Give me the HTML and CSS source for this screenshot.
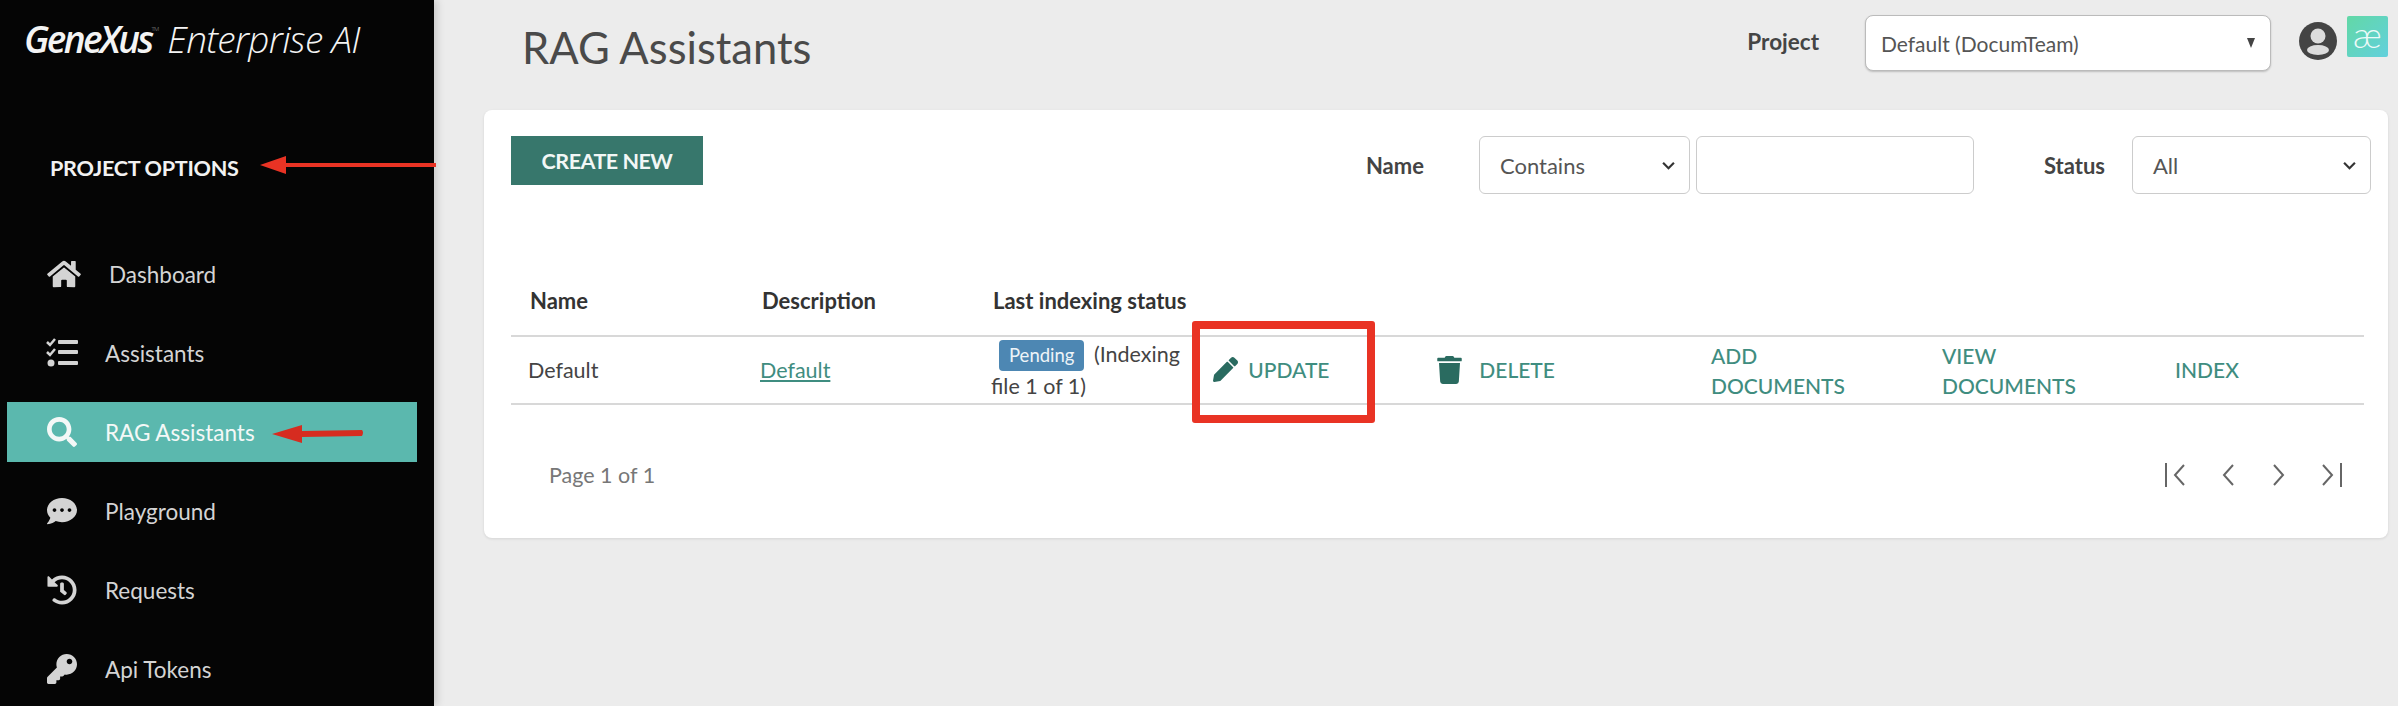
FILE: index.html
```html
<!DOCTYPE html>
<html lang="en">
<head>
  <meta charset="UTF-8">
  <meta name="viewport" content="width=device-width, initial-scale=1.0">
  <title>RAG Assistants</title>
  <link rel="stylesheet" href="styles.css">
</head>
<body>
  <div class="sidebar">
    <div class="logo"><b>GeneXus</b><sup>TM</sup> Enterprise AI</div>
    <h2>PROJECT OPTIONS</h2>
    <ul class="nav">
      <li>
        <svg class="nav-icon home" viewBox="0 0 576 512"><path d="M280.37 148.26L96 300.11V464a16 16 0 0 0 16 16l112.06-.29a16 16 0 0 0 15.92-16V368a16 16 0 0 1 16-16h64a16 16 0 0 1 16 16v95.64a16 16 0 0 0 16 16.05L464 480a16 16 0 0 0 16-16V300L295.67 148.26a12.19 12.19 0 0 0-15.3 0zM571.6 251.47L488 182.56V44.05a12 12 0 0 0-12-12h-56a12 12 0 0 0-12 12v72.61L318.47 43a48 48 0 0 0-61 0L4.34 251.47a12 12 0 0 0-1.6 16.9l25.5 31A12 12 0 0 0 45.15 301l235.22-193.74a12.19 12.19 0 0 1 15.3 0L530.9 301a12 12 0 0 0 16.9-1.6l25.5-31a12 12 0 0 0-1.7-16.93z"/></svg>
        <a class="home-link" href="#">Dashboard</a>
      </li>
      <li>
        <svg class="nav-icon" viewBox="0 0 32 30">
          <path class="tick" d="M1 4l3 3 5-6M1 14l3 3 5-6"/>
          <circle cx="5" cy="25" r="3.500"/>
          <rect x="12" y="2" width="20" height="4" rx="1"/>
          <rect x="12" y="12" width="20" height="4" rx="1"/>
          <rect x="12" y="23" width="20" height="4" rx="1"/>
        </svg>
        <a href="#">Assistants</a>
      </li>
      <li class="active">
        <svg class="nav-icon" viewBox="0 0 512 512"><path d="M505 442.7L405.3 343c-4.5-4.5-10.6-7-17-7H372c27.6-35.3 44-79.7 44-128C416 93.1 322.9 0 208 0S0 93.1 0 208s93.1 208 208 208c48.3 0 92.7-16.4 128-44v16.3c0 6.4 2.5 12.5 7 17l99.7 99.7c9.4 9.4 24.6 9.4 33.9 0l28.3-28.3c9.4-9.4 9.4-24.6.1-34zM208 336c-70.7 0-128-57.2-128-128 0-70.7 57.2-128 128-128 70.7 0 128 57.2 128 128 0 70.7-57.2 128-128 128z"/></svg>
        <a href="#">RAG Assistants</a>
      </li>
      <li>
        <svg class="nav-icon" viewBox="0 0 512 512"><path d="M256 32C114.6 32 0 125.1 0 240c0 49.6 21.4 95 57 130.7C44.5 421.1 2.7 466 2.2 466.5c-2.2 2.3-2.8 5.7-1.5 8.7S4.8 480 8 480c66.3 0 116-31.8 140.6-51.4 32.7 12.3 69 19.4 107.4 19.4 141.4 0 256-93.1 256-208S397.4 32 256 32zM128 272c-17.7 0-32-14.3-32-32s14.3-32 32-32 32 14.3 32 32-14.3 32-32 32zm128 0c-17.7 0-32-14.3-32-32s14.3-32 32-32 32 14.3 32 32-14.3 32-32 32zm128 0c-17.7 0-32-14.3-32-32s14.3-32 32-32 32 14.3 32 32-14.3 32-32 32z"/></svg>
        <a href="#">Playground</a>
      </li>
      <li>
        <svg class="nav-icon" viewBox="0 0 512 512"><path d="M504 255.531c.253 136.64-111.18 248.372-247.82 248.468-59.015.042-113.223-20.53-155.822-54.911-11.077-8.94-11.905-25.541-1.839-35.607l11.267-11.267c8.609-8.609 22.353-9.551 31.891-1.984C173.062 425.135 212.781 440 256 440c101.705 0 184-82.311 184-184 0-101.705-82.311-184-184-184-48.814 0-93.149 18.969-126.068 49.932l50.754 50.754c10.08 10.08 2.941 27.314-11.313 27.314H24c-8.837 0-16-7.163-16-16V38.627c0-14.254 17.234-21.393 27.314-11.314l49.372 49.372C129.209 34.136 189.552 8 256 8c136.81 0 247.747 110.78 248 247.531zm-180.912 78.784l9.823-12.63c8.138-10.463 6.253-25.542-4.21-33.679L288 256.349V152c0-13.255-10.745-24-24-24h-16c-13.255 0-24 10.745-24 24v135.651l65.409 50.874c10.463 8.137 25.541 6.253 33.679-4.21z"/></svg>
        <a href="#">Requests</a>
      </li>
      <li>
        <svg class="nav-icon" viewBox="0 0 512 512"><path d="M512 176.001C512 273.203 433.202 352 336 352c-11.22 0-22.19-1.062-32.827-3.069l-24.012 27.014A23.999 23.999 0 0 1 261.223 384H224v40c0 13.255-10.745 24-24 24h-40v40c0 13.255-10.745 24-24 24H24c-13.255 0-24-10.745-24-24v-78.059c0-6.365 2.529-12.47 7.029-16.971l161.802-161.802C163.108 213.814 160 195.271 160 176 160 78.798 238.797.001 335.999 0 433.488-.001 512 78.511 512 176.001zM336 128c0 26.51 21.49 48 48 48s48-21.49 48-48-21.49-48-48-48-48 21.49-48 48z"/></svg>
        <a href="#">Api Tokens</a>
      </li>
    </ul>
  </div>

  <div class="main">
    <div class="topbar">
      <h1>RAG Assistants</h1>
      <label class="project-label">Project</label>
      <div class="project-select">
        <span>Default (DocumTeam)</span>
        <svg class="caret" viewBox="0 0 8 12"><path d="M0 1h8L4 11z"/></svg>
      </div>
      <svg class="avatar" viewBox="0 0 38 38">
        <circle cx="19" cy="19" r="19"/>
        <circle class="avatar-part" cx="19" cy="14" r="7.500"/>
        <ellipse class="avatar-part" cx="19" cy="28" rx="11" ry="5"/>
      </svg>
      <div class="ae-logo">æ</div>
    </div>

    <div class="card">
      <div class="toolbar">
        <a class="btn-create" href="#">CREATE NEW</a>
        <div class="filters">
          <label class="filter-name">Name</label>
          <div class="field field-op">
            <span>Contains</span>
            <svg class="chevron" viewBox="0 0 12 8"><path d="M1 1.500l5 5 5-5"/></svg>
          </div>
          <div class="field field-text"></div>
          <label class="filter-status">Status</label>
          <div class="field field-status">
            <span>All</span>
            <svg class="chevron" viewBox="0 0 12 8"><path d="M1 1.500l5 5 5-5"/></svg>
          </div>
        </div>
      </div>

      <table class="table">
        <thead>
          <tr>
            <th class="col-name">Name</th>
            <th class="col-desc">Description</th>
            <th class="col-status">Last indexing status</th>
            <th class="col-update"></th>
            <th class="col-delete"></th>
            <th class="col-add"></th>
            <th class="col-view"></th>
            <th></th>
          </tr>
        </thead>
        <tbody>
          <tr>
            <td>Default</td>
            <td><a class="desc-link" href="#">Default</a></td>
            <td class="status-cell"><span class="badge">Pending</span> (Indexing file 1 of 1)</td>
            <td>
              <a class="action" href="#">
                <svg viewBox="0 0 512 512"><path d="M497.900 142.100l-46.100 46.100c-4.700 4.700-12.300 4.700-17 0l-111-111c-4.700-4.700-4.700-12.300 0-17l46.100-46.100c18.700-18.700 49.100-18.700 67.900 0l60.100 60.100c18.800 18.700 18.800 49.100 0 67.900zM284.200 99.800L21.600 362.400.4 483.900c-2.900 16.400 11.400 30.600 27.800 27.800l121.500-21.300 262.600-262.600c4.700-4.700 4.700-12.300 0-17l-111-111c-4.800-4.700-12.400-4.700-17.100 0z"/></svg>
                UPDATE
              </a>
            </td>
            <td>
              <a class="action" href="#">
                <svg class="trash" viewBox="0 0 448 512"><path d="M432 32H312l-9.400-18.700A24 24 0 0 0 281.100 0H166.800a23.720 23.720 0 0 0-21.400 13.300L136 32H16A16 16 0 0 0 0 48v32a16 16 0 0 0 16 16h416a16 16 0 0 0 16-16V48a16 16 0 0 0-16-16zM53.200 467a48 48 0 0 0 47.900 45h245.800a48 48 0 0 0 47.900-45L416 128H32z"/></svg>
                DELETE
              </a>
            </td>
            <td class="wrap-cell"><a class="action" href="#">ADD DOCUMENTS</a></td>
            <td class="wrap-cell"><a class="action" href="#">VIEW DOCUMENTS</a></td>
            <td><a class="action" href="#">INDEX</a></td>
          </tr>
        </tbody>
      </table>

      <div class="pager">
        <span>Page 1 of 1</span>
        <div class="pager-btns">
          <svg viewBox="0 0 26 26"><path d="M2 1v24M20 3l-9 10 9 10"/></svg>
          <svg viewBox="0 0 26 26"><path d="M18 3l-9 10 9 10"/></svg>
          <svg viewBox="0 0 26 26"><path d="M8 3l9 10-9 10"/></svg>
          <svg viewBox="0 0 26 26"><path d="M6 3l9 10-9 10M24 1v24"/></svg>
        </div>
      </div>
    </div>
  </div>

  <!-- red annotations on top of the screenshot -->
  <svg class="mark mark-top" viewBox="0 0 176 20"><path d="M0 10L26 1v7h150v4H26v7z"/></svg>
  <svg class="mark mark-side" viewBox="0 0 92 20"><path d="M0 10L30 1v6l60-1q2 2 0 6l-60 1v6z"/></svg>
  <div class="mark-box"></div>
</body>
</html>
```

FILE: styles.css
```css
body {
  margin: 0;
  height: 706px;
  display: flex;
  position: relative;
  overflow: hidden;
  font-family: 'Lato', sans-serif;
  font-size: 21px;
  color: #444;
  background-color: #ececec;
}

a {
  text-decoration: none;
}

.sidebar {
  width: 434px;
  flex-shrink: 0;
  background-color: #050505;
  box-shadow: 3px 0 8px rgba(0, 0, 0, 0.15);
  color: #d8d8d8;
}

.logo {
  margin: 15px 0 0 24px;
  font-family: 'Open Sans', sans-serif;
  font-size: 37px;
  font-style: italic;
  font-weight: 300;
  line-height: 48px;
  letter-spacing: -0.7px;
  color: #f4f4f4;
  white-space: nowrap;
}

.logo b {
  font-weight: 600;
  letter-spacing: -2.6px;
}

.logo sup {
  font-size: 6px;
  font-style: normal;
  vertical-align: 22px;
  line-height: 0;
  color: #999;
}

.sidebar h2 {
  margin: 85px 0 0 50px;
  font-size: 21.6px;
  font-weight: 700;
  line-height: 40px;
  letter-spacing: -0.3px;
  color: #f2f2f2;
}

.nav {
  list-style-type: none;
  margin: 56px 0 0 7px;
  padding: 0;
  width: 410px;
  font-size: 22.5px;
}

.nav li {
  height: 60px;
  margin-bottom: 19px;
  padding-left: 39px;
  display: flex;
  align-items: center;
  gap: 27px;
}

.nav a {
  color: #d4d4d4;
}

.nav li.active {
  background-color: #5bb8ae;
}

.nav li.active a {
  color: #f4f8f7;
}

.nav-icon {
  width: 32px;
  height: 30px;
  flex-shrink: 0;
  fill: #d4d4d4;
}

.nav-icon.home {
  width: 36px;
}

.nav-icon .tick {
  fill: none;
  stroke: #d4d4d4;
  stroke-width: 2.500;
}

.nav li.active .nav-icon {
  fill: #f4f8f7;
}

.main {
  flex: 1;
  min-width: 0;
  padding: 0 10px 0 50px;
}

.topbar {
  height: 110px;
  display: flex;
  align-items: flex-start;
}

.topbar h1 {
  margin: 21px 0 0 38px;
  font-size: 43.500px;
  font-weight: 400;
  line-height: 52px;
  color: #4a4a4a;
}

.project-label {
  margin: 27px 0 0 auto;
  font-size: 22.500px;
  font-weight: 700;
  line-height: 30px;
}

.project-select {
  width: 406px;
  height: 56px;
  margin: 15px 0 0 46px;
  padding: 0 15px;
  box-sizing: border-box;
  display: flex;
  align-items: center;
  justify-content: space-between;
  background: white;
  border: 1px solid #bbb;
  border-radius: 8px;
  box-shadow: 0 1px 2px rgba(0, 0, 0, 0.2);
  font-size: 21px;
  color: #555;
}

.caret {
  width: 8px;
  height: 12px;
  fill: #444;
}

.avatar {
  width: 38px;
  height: 38px;
  margin: 22px 0 0 28px;
  fill: #444;
}

.avatar .avatar-part {
  fill: #dcdcdc;
}

.ae-logo {
  width: 41px;
  height: 41px;
  margin: 16px 0 0 10px;
  background: linear-gradient(135deg, #62d8a6, #62d0dc);
  border-radius: 2px;
  text-align: center;
  font-size: 36px;
  font-weight: 300;
  line-height: 36px;
  color: #eefaf8;
}

.card {
  height: 428px;
  padding: 26px 17px 0 27px;
  box-sizing: border-box;
  background: white;
  border-radius: 8px;
  box-shadow: 0 1px 3px rgba(0, 0, 0, 0.1);
}

.toolbar {
  display: flex;
  align-items: flex-start;
}

.btn-create {
  width: 192px;
  height: 49px;
  background-color: #37776c;
  color: #f2f7f6;
  font-size: 21.500px;
  font-weight: 700;
  line-height: 50px;
  letter-spacing: -0.5px;
  text-align: center;
}

.filters {
  margin-left: auto;
  display: flex;
  align-items: center;
}

.filters label {
  font-size: 22px;
  font-weight: 700;
}

.field {
  height: 58px;
  padding: 0 14px 0 20px;
  box-sizing: border-box;
  display: flex;
  align-items: center;
  justify-content: space-between;
  border: 1px solid #ccc;
  border-radius: 6px;
  font-size: 22px;
  color: #555;
}

.field-op {
  width: 211px;
  margin-left: 55px;
}

.field-text {
  width: 278px;
  margin-left: 6px;
}

.field-status {
  width: 239px;
  margin-left: 27px;
}

.filter-status {
  margin-left: 70px;
}

.chevron {
  width: 13px;
  height: 9px;
  fill: none;
  stroke: #333;
  stroke-width: 2;
}

.table {
  width: 1853px;
  margin-top: 78px;
  border-collapse: collapse;
  table-layout: fixed;
}

.table th {
  height: 64px;
  padding: 0 0 6px 19px;
  box-sizing: border-box;
  text-align: left;
  font-size: 22px;
  font-weight: 700;
  color: #333;
  white-space: nowrap;
}

.table td {
  height: 68px;
  padding: 0 0 0 17px;
  box-sizing: border-box;
  border-top: 2px solid #d8d8d8;
  border-bottom: 2px solid #d8d8d8;
  font-size: 21.500px;
  line-height: 30px;
}

.col-name { width: 232px; }
.col-desc { width: 231px; }
.col-status { width: 222px; }
.col-update { width: 224px; }
.col-delete { width: 274px; }
.col-add { width: 231px; }
.col-view { width: 233px; }

.desc-link {
  color: #3f8d80;
  text-decoration: underline;
}

.table .status-cell {
  padding-right: 2px;
}

.badge {
  display: inline-block;
  margin: 0 4px 0 8px;
  padding: 0 10px;
  height: 31px;
  background-color: #4d87b3;
  border-radius: 4px;
  color: #eef4f8;
  font-size: 18.500px;
  line-height: 30px;
}

.table .wrap-cell {
  padding: 2px 40px 0 17px;
}

.action {
  display: inline-block;
  color: #3f8d80;
  font-size: 21px;
  font-weight: 500;
}

.action svg {
  width: 25px;
  height: 25px;
  margin-right: 5px;
  vertical-align: -4px;
  fill: #2a6b60;
}

.action svg.trash {
  margin-right: 12px;
  height: 28px;
  vertical-align: -6px;
}

.pager {
  margin: 57px 28px 0 38px;
  display: flex;
  align-items: center;
  justify-content: space-between;
  font-size: 21.500px;
  color: #777;
}

.pager-btns {
  display: flex;
  gap: 25px;
}

.pager-btns svg {
  width: 26px;
  height: 26px;
  fill: none;
  stroke: #666;
  stroke-width: 2;
}

.mark {
  position: absolute;
  fill: #e93324;
}

.mark-top {
  left: 260px;
  top: 155px;
  width: 176px;
  height: 20px;
}

.mark-side {
  left: 272px;
  top: 424px;
  width: 92px;
  height: 20px;
  fill: #d62c20;
}

.mark-box {
  position: absolute;
  left: 1192px;
  top: 321px;
  width: 183px;
  height: 102px;
  box-sizing: border-box;
  border: 8px solid #e93324;
  border-radius: 3px;
}
```
